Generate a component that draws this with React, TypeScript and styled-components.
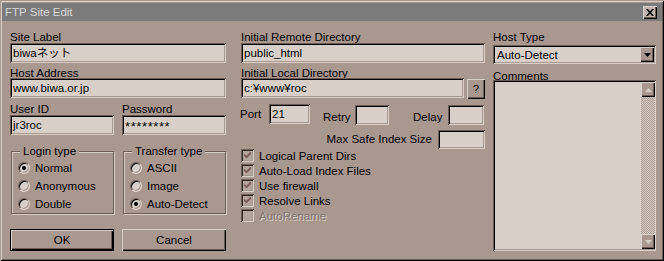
import React from 'react';
import styled, { createGlobalStyle } from 'styled-components';

const BG = '#a89890';
const FACE = '#d8d0c8';
const SHADOW = '#6c5c54';
const FONT = '"Liberation Sans", "Noto Sans CJK JP", sans-serif';

const GlobalStyle = createGlobalStyle`
    html, body {
        margin: 0;
        padding: 0;
        background: ${BG};
    }
    * {
        box-sizing: border-box;
    }
`;

const Window = styled.div`
    width: 664px;
    height: 261px;
    padding: 3px 2px;
    background: ${BG};
    font-family: ${FONT};
    font-size: 11.5px;
    color: #000;
    box-shadow: inset 1px 1px 0 ${BG}, inset -1px -1px 0 #000, inset 2px 2px 0 ${FACE},
        inset -2px -2px 0 ${SHADOW};
`;

const TitleBar = styled.div`
    height: 18px;
    display: flex;
    align-items: center;
    justify-content: space-between;
    padding: 0 5px 0 3px;
    background: #7b7b7b;
    color: #d8d8d8;
`;

const Raised = styled.div`
    display: flex;
    align-items: center;
    justify-content: center;
    background: ${BG};
    box-shadow: inset 1px 1px 0 ${FACE}, inset -1px -1px 0 #000, inset -2px -2px 0 ${SHADOW};
`;

const CloseBtn = styled(Raised)`
    width: 14px;
    height: 13px;
    background: #c0b4ac;
`;

const Body = styled.div`
    display: flex;
    padding: 10px 6px 0 8px;
`;

const Column = styled.div<{ $w: number; $ml?: number }>`
    width: ${(p) => p.$w}px;
    margin-left: ${(p) => p.$ml ?? 0}px;
    display: flex;
    flex-direction: column;
`;

const Field = styled.div<{ $mt?: number; $w?: number }>`
    margin-top: ${(p) => p.$mt ?? 0}px;
    width: ${(p) => (p.$w ? `${p.$w}px` : 'auto')};
    display: flex;
    flex-direction: column;
`;

const Label = styled.div<{ $h?: number }>`
    height: ${(p) => p.$h ?? 12}px;
    line-height: 12px;
    white-space: nowrap;
`;

const Sunken = styled.div<{ $w?: number; $h?: number; $mt?: number }>`
    width: ${(p) => (p.$w ? `${p.$w}px` : '100%')};
    height: ${(p) => p.$h ?? 20}px;
    margin-top: ${(p) => p.$mt ?? 0}px;
    flex-shrink: 0;
    display: flex;
    align-items: center;
    padding: 2px 1px 2px 3px;
    background: ${FACE};
    line-height: 14px;
    white-space: nowrap;
    box-shadow: inset 1px 1px 0 ${SHADOW}, inset -1px -1px 0 ${FACE}, inset 2px 2px 0 #000,
        inset -2px -2px 0 ${BG};
`;

const Masked = styled.span`
    font-size: 13px;
    letter-spacing: 0.6px;
    padding-top: 3px;
`;

const Row = styled.div<{ $mt?: number; $gap?: number; $end?: boolean }>`
    display: flex;
    align-items: flex-start;
    margin-top: ${(p) => p.$mt ?? 0}px;
    gap: ${(p) => p.$gap ?? 0}px;
    justify-content: ${(p) => (p.$end ? 'flex-end' : 'flex-start')};
`;

const InlineLabel = styled.div<{ $w?: number; $mt?: number; $ml?: number }>`
    width: ${(p) => (p.$w ? `${p.$w}px` : 'auto')};
    margin-top: ${(p) => p.$mt ?? 0}px;
    margin-left: ${(p) => p.$ml ?? 0}px;
    line-height: 12px;
    white-space: nowrap;
`;

const HelpBtn = styled(Raised)`
    width: 18px;
    height: 20px;
    margin-top: 1px;
    margin-left: 3px;
`;

const Groups = styled.div`
    display: flex;
    gap: 9px;
    padding-left: 1px;
    margin-top: 10px;
`;

const GroupBox = styled.fieldset`
    width: 103px;
    margin: 0;
    padding: 2px 0 0 6px;
    min-width: 0;
    border: 1px solid ${SHADOW};
    box-shadow: 1px 1px 0 ${FACE}, inset 1px 1px 0 ${FACE};
`;

const Legend = styled.legend`
    margin-left: 2px;
    padding: 0 3px;
    line-height: 12px;
    background: ${BG};
`;

const RadioRow = styled.div`
    height: 18px;
    display: flex;
    align-items: center;
    gap: 5px;
`;

const RadioDot = styled.span<{ $on?: boolean }>`
    width: 12px;
    height: 12px;
    border-radius: 50%;
    background: ${FACE};
    border: 1px solid;
    border-color: ${SHADOW} ${FACE} ${FACE} ${SHADOW};
    box-shadow: inset 1px 1px 0 #000, inset -1px -1px 0 ${BG};
    display: flex;
    align-items: center;
    justify-content: center;

    &::after {
        content: '';
        width: 4px;
        height: 4px;
        border-radius: 50%;
        background: ${(p) => (p.$on ? '#000' : 'transparent')};
    }
`;

const Buttons = styled.div`
    display: flex;
    gap: 8px;
    margin-top: 15px;
`;

const PushButton = styled(Raised)<{ $default?: boolean }>`
    width: 104px;
    height: 22px;
    ${(p) =>
        p.$default
            ? `box-shadow: inset 0 0 0 1px #000, inset 2px 2px 0 ${FACE}, inset -2px -2px 0 #000, inset -3px -3px 0 ${SHADOW};`
            : ''}
`;

const CheckList = styled.div`
    display: flex;
    flex-direction: column;
    margin-top: -1px;
`;

const CheckRow = styled.div<{ $disabled?: boolean }>`
    height: 15px;
    display: flex;
    align-items: center;
    gap: 5px;
    color: ${(p) => (p.$disabled ? '#857570' : '#000')};
    text-shadow: ${(p) => (p.$disabled ? `1px 1px 0 ${FACE}` : 'none')};
`;

const CheckBox = styled.span`
    width: 13px;
    height: 13px;
    display: flex;
    align-items: center;
    justify-content: center;
    background: #b4a49c;
    box-shadow: inset 1px 1px 0 ${SHADOW}, inset -1px -1px 0 ${FACE}, inset 2px 2px 0 #302824,
        inset -2px -2px 0 ${BG};
`;

const Select = styled(Sunken)`
    justify-content: space-between;
    padding: 2px 2px 2px 4px;
`;

const DropBtn = styled(Raised)`
    width: 14px;
    height: 15px;
`;

const TextArea = styled(Sunken)`
    align-items: stretch;
    justify-content: flex-end;
    padding: 2px 1px 2px 2px;
`;

const ScrollBar = styled.div`
    width: 14px;
    display: flex;
    flex-direction: column;
`;

const Track = styled.div`
    flex: 1;
    background: repeating-conic-gradient(${FACE} 0 25%, ${BG} 0 50%) 0 0 / 2px 2px;
`;

const ArrowBtn = styled(Raised)`
    width: 14px;
    height: 15px;
`;

const Check = () => (
    <svg width="7" height="7" viewBox="0 0 7 7">
        <path d="M0 2v2l2 2h1l4-4V0h-1L2.5 3.5z" fill="#7a605a" />
    </svg>
);

const Tri = ({ up, color }: { up?: boolean; color: string }) => (
    <svg width="7" height="4" viewBox="0 0 7 4">
        <path d={up ? 'M3.5 0L7 4H0z' : 'M0 0h7L3.5 4z'} fill={color} />
    </svg>
);

const checks = [
    { label: 'Logical Parent Dirs', on: true },
    { label: 'Auto-Load Index Files', on: true },
    { label: 'Use firewall', on: true },
    { label: 'Resolve Links', on: true },
    { label: 'AutoRename', on: false, disabled: true },
];

const App: React.FC = () => {
    return (
        <>
            <GlobalStyle />
            <Window>
                <TitleBar>
                    <span>FTP Site Edit</span>
                    <CloseBtn>
                        <svg width="8" height="7" viewBox="0 0 8 7">
                            <path d="M0 0h2l2 2.5L6 0h2L5 3.5 8 7H6L4 4.5 2 7H0l3-3.5z" fill="#000" />
                        </svg>
                    </CloseBtn>
                </TitleBar>
                <Body>
                    <Column $w={216}>
                        <Field>
                            <Label>Site Label</Label>
                            <Sunken>biwaネット</Sunken>
                        </Field>
                        <Field $mt={4}>
                            <Label $h={11}>Host Address</Label>
                            <Sunken>www.biwa.or.jp</Sunken>
                        </Field>
                        <Row $mt={5} $gap={8}>
                            <Field $w={104}>
                                <Label>User ID</Label>
                                <Sunken>jr3roc</Sunken>
                            </Field>
                            <Field $w={104}>
                                <Label>Password</Label>
                                <Sunken>
                                    <Masked>********</Masked>
                                </Sunken>
                            </Field>
                        </Row>
                        <Groups>
                            <GroupBox>
                                <Legend>Login type</Legend>
                                <RadioRow>
                                    <RadioDot $on />
                                    Normal
                                </RadioRow>
                                <RadioRow>
                                    <RadioDot />
                                    Anonymous
                                </RadioRow>
                                <RadioRow>
                                    <RadioDot />
                                    Double
                                </RadioRow>
                            </GroupBox>
                            <GroupBox>
                                <Legend>Transfer type</Legend>
                                <RadioRow>
                                    <RadioDot />
                                    ASCII
                                </RadioRow>
                                <RadioRow>
                                    <RadioDot />
                                    Image
                                </RadioRow>
                                <RadioRow>
                                    <RadioDot $on />
                                    Auto-Detect
                                </RadioRow>
                            </GroupBox>
                        </Groups>
                        <Buttons>
                            <PushButton $default>OK</PushButton>
                            <PushButton>Cancel</PushButton>
                        </Buttons>
                    </Column>

                    <Column $w={244} $ml={15}>
                        <Field>
                            <Label>Initial Remote Directory</Label>
                            <Sunken>public_html</Sunken>
                        </Field>
                        <Field $mt={4}>
                            <Label $h={11}>Initial Local Directory</Label>
                            <Row>
                                <Sunken $w={223}>c:¥www¥roc</Sunken>
                                <HelpBtn>?</HelpBtn>
                            </Row>
                        </Field>
                        <Row $mt={5}>
                            <InlineLabel $w={29} $mt={4} $ml={-1}>
                                Port
                            </InlineLabel>
                            <Sunken $w={41}>21</Sunken>
                            <InlineLabel $w={32} $mt={7} $ml={13}>
                                Retry
                            </InlineLabel>
                            <Sunken $w={34} $mt={1} />
                            <InlineLabel $w={35} $mt={7} $ml={24}>
                                Delay
                            </InlineLabel>
                            <Sunken $w={36} $mt={1} />
                        </Row>
                        <Row $mt={5} $gap={6} $end>
                            <InlineLabel $mt={3}>Max Safe Index Size</InlineLabel>
                            <Sunken $w={47} $h={19} />
                        </Row>
                        <CheckList>
                            {checks.map((c) => (
                                <CheckRow key={c.label} $disabled={c.disabled}>
                                    <CheckBox>{c.on && <Check />}</CheckBox>
                                    {c.label}
                                </CheckRow>
                            ))}
                        </CheckList>
                    </Column>

                    <Column $w={163} $ml={8}>
                        <Field>
                            <Label>Host Type</Label>
                            <Select $h={19} $mt={2}>
                                Auto-Detect
                                <DropBtn>
                                    <Tri color="#000" />
                                </DropBtn>
                            </Select>
                        </Field>
                        <Field $mt={6}>
                            <Label $h={10}>Comments</Label>
                            <TextArea $h={171}>
                                <ScrollBar>
                                    <ArrowBtn>
                                        <Tri up color="#d8d0c8" />
                                    </ArrowBtn>
                                    <Track />
                                    <ArrowBtn>
                                        <Tri color="#d8d0c8" />
                                    </ArrowBtn>
                                </ScrollBar>
                            </TextArea>
                        </Field>
                    </Column>
                </Body>
            </Window>
        </>
    );
};

export default App;
